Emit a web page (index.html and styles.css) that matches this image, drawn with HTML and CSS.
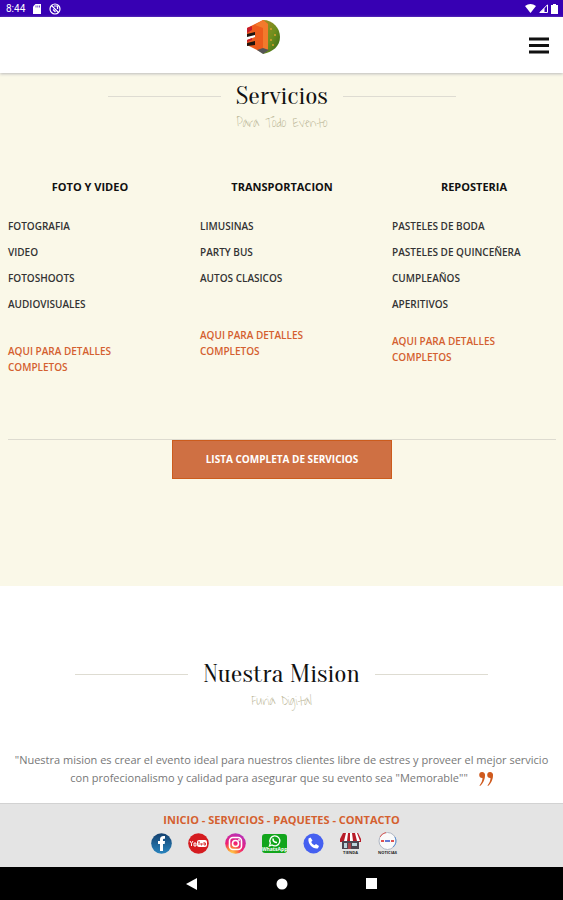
FILE: index.html
```html
<!DOCTYPE html>
<html lang="es">
<head>
<meta charset="utf-8">
<meta name="viewport" content="width=device-width, initial-scale=1">
<title>Servicios</title>
<link rel="stylesheet" href="styles.css">
</head>
<body>
<div class="status">
  <span class="clock">8:44</span>
  <svg width="10" height="10" viewBox="0 0 10 10"><path d="M3.5 0H9v10H1V2.5z" fill="#fff"/><path d="M4 1.5v2M5.8 1.5v2M7.5 1.5v2" stroke="#3700b3" stroke-width=".7"/></svg>
  <svg width="12" height="12" viewBox="0 0 12 12" fill="none" stroke="#fff" stroke-width="1.2"><circle cx="6" cy="6" r="5"/><path d="M2.5 2.5l7 7M4 6.5L6.5 9M5 3h3.500v3"/></svg>
  <span class="signals">
    <svg width="11" height="9" viewBox="0 0 11 9"><path d="M0 2Q5.500-2 11 2L5.500 9z" fill="#fff"/></svg>
    <svg width="9" height="9" viewBox="0 0 9 9"><path d="M.8 8.500L8.500.8v7.700z" fill="none" stroke="#fff"/><path d="M1 8.500L5.500 4v4.500z" fill="#fff"/></svg>
    <svg width="7" height="10" viewBox="0 0 7 10"><path d="M2 0h3v1h2v9H0V1h2z" fill="#fff"/></svg>
  </span>
</div>
<header class="header">
  <a class="logo" href="#" aria-label="Furia Digital">
    <svg width="36" height="36" viewBox="0 0 36 36">
      <defs><linearGradient id="leaf" x2="1" y2="1"><stop stop-color="#a58a20"/><stop offset=".5" stop-color="#6f8f1e"/><stop offset="1" stop-color="#2f6414"/></linearGradient></defs>
      <path d="M18 1C28 1 35 9 35 18S28 33 18 35z" fill="url(#leaf)"/>
      <path d="M18 1L2 9v7l8-2v4l-8 3v5l16 8 5-3V5z" fill="#ed5b1c"/>
      <path d="M18 1l-8 5 8 3v24l5-3V5z" fill="#f27a2c"/>
      <path d="M2 9l5-2v4l-5 3zM2 21l5-2v2l-5 2z" fill="#c71d2c"/>
      <path d="M2 15l8-2v3l-8 2zM2 24l8-2v4l-8 1z" fill="#21150f"/>
      <path d="M12 31l6 4 6-4-6-2z" fill="#555"/>
      <g fill="#d9a02c"><circle cx="26" cy="10" r="1"/><circle cx="30" cy="16" r="1"/><circle cx="26" cy="21" r="1"/><circle cx="28" cy="26" r="1"/></g>
    </svg>
  </a>
  <button class="menu" type="button" aria-label="Menu"><svg width="20" height="17" viewBox="0 0 20 17"><path d="M0 2h20M0 8.500h20M0 15h20" stroke="#111" stroke-width="3"/></svg></button>
</header>
<main class="content">
  <section class="services">
    <div class="heading"><h2>Servicios</h2></div>
    <p class="tagline">Para Todo Evento</p>
    <div class="columns">
      <article>
        <h3>FOTO Y VIDEO</h3>
        <ul><li>FOTOGRAFIA</li><li>VIDEO</li><li>FOTOSHOOTS</li><li>AUDIOVISUALES</li></ul>
        <a class="details spaced" href="#">AQUI PARA DETALLES COMPLETOS</a>
      </article>
      <article>
        <h3>TRANSPORTACION</h3>
        <ul><li>LIMUSINAS</li><li>PARTY BUS</li><li>AUTOS CLASICOS</li></ul>
        <a class="details far" href="#">AQUI PARA DETALLES COMPLETOS</a>
      </article>
      <article>
        <h3>REPOSTERIA</h3>
        <ul><li>PASTELES DE BODA</li><li>PASTELES DE QUINCEÑERA</li><li>CUMPLEAÑOS</li><li>APERITIVOS</li></ul>
        <a class="details" href="#">AQUI PARA DETALLES COMPLETOS</a>
      </article>
    </div>
    <div class="full-list"><a href="#">LISTA COMPLETA DE SERVICIOS</a></div>
  </section>
  <section class="mission">
    <div class="heading"><h2>Nuestra Mision</h2></div>
    <p class="tagline">Furia Digital</p>
    <blockquote>"Nuestra mision es crear el evento ideal para nuestros clientes libre de estres y proveer el mejor servicio con profecionalismo y calidad para asegurar que su evento sea "Memorable""
      <svg width="14" height="14" viewBox="0 0 14 14" fill="#cf5a1e"><path d="M3 0a3 3 0 0 1 3 3.500C6 8 3.500 12 1 14l-.5-.6C2.500 11 3.500 8.500 3.500 6A3 3 0 1 1 3 0z"/><path d="M11 0a3 3 0 0 1 3 3.500C14 8 11.500 12 9 14l-.5-.6c2-2.400 3-4.900 3-7.400A3 3 0 1 1 11 0z"/></svg>
    </blockquote>
  </section>
</main>
<footer class="footer">
  <nav class="links"><a href="#">INICIO</a> - <a href="#">SERVICIOS</a> - <a href="#">PAQUETES</a> - <a href="#">CONTACTO</a></nav>
  <div class="social">
    <a href="#" aria-label="Facebook"><svg width="21" height="21" viewBox="0 0 21 21"><defs><linearGradient id="fb" x2="0" y2="1"><stop stop-color="#133f6d"/><stop offset="1" stop-color="#2985bf"/></linearGradient></defs><circle cx="10.500" cy="10.500" r="10.300" fill="url(#fb)"/><path d="M9 18v-7H7V8h2V6.500C9 4.200 10.200 3 12.500 3H14v2.800h-1.200c-.6 0-.8.300-.8.900V8h2l-.3 3H12v7z" fill="#fff"/></svg></a>
    <a href="#" aria-label="YouTube"><svg width="21" height="21" viewBox="0 0 21 21"><circle cx="10.500" cy="10.500" r="10.300" fill="#d51c20"/><path d="M2 8l1.500 2.500V13m0-2.500L5 8m1 3v2h2v-3H6z" fill="none" stroke="#fff"/><rect x="9" y="7" width="10" height="7" rx="2" fill="#fff"/><path d="M11 9v3m-1-3h2m1 1v2h1v-2m2-1v3h1.500v-2H16" fill="none" stroke="#d51c20" stroke-width=".8"/></svg></a>
    <a href="#" aria-label="Instagram"><svg width="21" height="21" viewBox="0 0 21 21"><defs><radialGradient id="ig" cx=".3" cy="1" r="1.100"><stop stop-color="#ffdc55"/><stop offset=".25" stop-color="#fc8835"/><stop offset=".5" stop-color="#f01e73"/><stop offset="1" stop-color="#b034c2"/></radialGradient></defs><circle cx="10.500" cy="10.500" r="10.300" fill="url(#ig)"/><g fill="none" stroke="#fff" stroke-width="1.600"><rect x="4.500" y="4.500" width="12" height="12" rx="3.500"/><circle cx="10.500" cy="10.500" r="3"/></g><circle cx="14" cy="7" r=".9" fill="#fff"/></svg></a>
    <a href="#" aria-label="WhatsApp"><svg width="25" height="21" viewBox="0 0 25 21"><rect y="1" width="25" height="19" rx="3" fill="#12a51c"/><path d="M7.500 13l.8-3A5 5 0 1 1 10 12z" fill="none" stroke="#fff" stroke-width="1.300"/><path d="M11 5.500c0 2.500 1.500 4 4 4" fill="none" stroke="#fff" stroke-width="1.600"/><text class="wa" x="12.500" y="18" text-anchor="middle">WhatsApp</text></svg></a>
    <a href="#" aria-label="Llamar"><svg width="21" height="21" viewBox="0 0 21 21"><circle cx="10.500" cy="10.500" r="10" fill="#4560f0"/><path d="M5.500 5.500l2-1 2 3-1.300 1.600c.7 1.500 1.700 2.500 3.200 3.200l1.600-1.300 3 2-1 2.300C10.500 16.500 4.500 11.500 5.500 5.500z" fill="#fff"/></svg></a>
    <a href="#" aria-label="Tienda"><svg width="21" height="23" viewBox="0 0 21 23"><path d="M3 1h15l3 6v3H0V7z" fill="#b81c28"/><path d="M6 1L4 9h3l1-8zM10 1v8h3l-1-8zM15 1l2 8h3l-3-8z" fill="#fff"/><path d="M2 9h17v8H2z" fill="#4d4651"/><path d="M4 11h3v5H4zM12 11h5v3h-5z" fill="#bcd5dc"/><path d="M8 11h3v6H8z" fill="#a64349"/><text class="caption" x="10.500" y="22" text-anchor="middle">TIENDA</text></svg></a>
    <a href="#" aria-label="Noticias"><svg width="21" height="23" viewBox="0 0 21 23"><circle cx="10.500" cy="9" r="8.500" fill="#fafafa" stroke="#b0b7c4"/><path d="M3 5a8.500 8.500 0 0 1 6-4.500" stroke="#df5b56" fill="none"/><path d="M18 5a8.500 8.500 0 0 1-2 10" stroke="#5b91d7" fill="none"/><path d="M4 9h3M14 9h3" stroke="#e05250" stroke-width="2"/><path d="M8 9h5" stroke="#687bd2" stroke-width="2"/><text class="caption" x="10.500" y="22" text-anchor="middle">NOTICIAS</text></svg></a>
  </div>
</footer>
<div class="system">
  <button type="button" aria-label="Atrás"><svg width="12" height="12" viewBox="0 0 12 12"><path d="M0 6L11 0v12z" fill="#fff"/></svg></button>
  <button type="button" aria-label="Inicio"><svg width="12" height="12" viewBox="0 0 12 12"><circle cx="6" cy="6" r="5.500" fill="#fff"/></svg></button>
  <button type="button" aria-label="Recientes"><svg width="12" height="12" viewBox="0 0 12 12"><rect width="11" height="11" fill="#fff"/></svg></button>
</div>
</body>
</html>
```
FILE: styles.css
```css
* { box-sizing: border-box; }
body {
  margin: 0;
  height: 100vh;
  display: flex;
  flex-direction: column;
  font-family: "Open Sans", "Noto Sans", sans-serif;
  font-size: 10px;
  color: #333;
  background: #fff;
}
h2, h3, p, ul, blockquote { margin: 0; padding: 0; }
a { color: #d4602f; text-decoration: none; }
button { border: 0; padding: 0; background: none; display: flex; }
svg { display: block; }

.status {
  flex: none;
  height: 17px;
  padding: 0 5px 0 6px;
  display: flex;
  align-items: center;
  gap: 7px;
  background: #3700b3;
  color: #fff;
}
.clock { font: 10px Roboto, sans-serif; }
.signals { margin-left: auto; display: flex; align-items: center; gap: 3px; }

.header {
  flex: none;
  height: 56px;
  padding: 0 14px;
  display: grid;
  grid-template-columns: 20px 1fr 20px;
  align-items: center;
  background: #fff;
  box-shadow: 0 1px 3px #bbb;
  z-index: 1;
}
.logo { grid-column: 2; justify-self: center; margin: 0 38px 16px 0; }

.content { flex: 1; min-height: 0; overflow: hidden; }
.services { padding: 8px 7px 107px 8px; background: #faf8e8; }
.heading { display: flex; align-items: center; justify-content: center; gap: 15px; }
.heading::before, .heading::after { content: ""; width: 113px; height: 1px; background: #dedcd2; }
h2 { font: 26px/30px "Oranienbaum", "Liberation Serif", serif; color: #111; }
.tagline {
  font: 14px/24px "Waiting for the Sunrise", "Shadows Into Light", "Liberation Serif", cursive;
  text-align: center;
  color: #bdb89a;
}
.columns { display: grid; grid-template-columns: repeat(3, 1fr); gap: 28px; padding-top: 44px; }
h3 { font-size: 11px; line-height: 16px; font-weight: 700; text-align: center; color: #111; }
ul { list-style: none; padding-top: 18px; font-weight: 600; line-height: 26px; }
.details { display: block; margin-top: 16px; padding-right: 40px; font-weight: 600; line-height: 16px; }
.spaced { margin-top: 26px; }
.far { margin-top: 36px; }
.full-list { margin-top: 64px; border-top: 1px solid #dddbd0; text-align: center; }
.full-list a {
  display: inline-block;
  width: 220px;
  border: 1px solid #cc5c1c;
  background: #cf7043;
  color: #fff;
  font-weight: 700;
  line-height: 37px;
}
.mission { padding: 73px 8px 0; background: #fff; }
.mission blockquote { padding-top: 38px; font-size: 11px; line-height: 18px; text-align: center; color: #777; }
.mission svg { display: inline-block; vertical-align: middle; margin-left: 8px; }

.footer { flex: none; height: 64px; padding-top: 8px; background: #e4e4e4; border-top: 1px solid #d2d2d2; }
.links { font-size: 11px; line-height: 16px; font-weight: 700; text-align: center; color: #d4602f; }
.social { display: flex; justify-content: center; align-items: center; gap: 16px; padding-top: 4px; padding-right: 14px; }
.wa { font: 700 5px "Open Sans", sans-serif; fill: #fff; }
.caption { font: 700 4px "Open Sans", sans-serif; fill: #222; }

.system { flex: none; height: 33px; display: flex; justify-content: center; align-items: center; gap: 78px; background: #000; }
```
